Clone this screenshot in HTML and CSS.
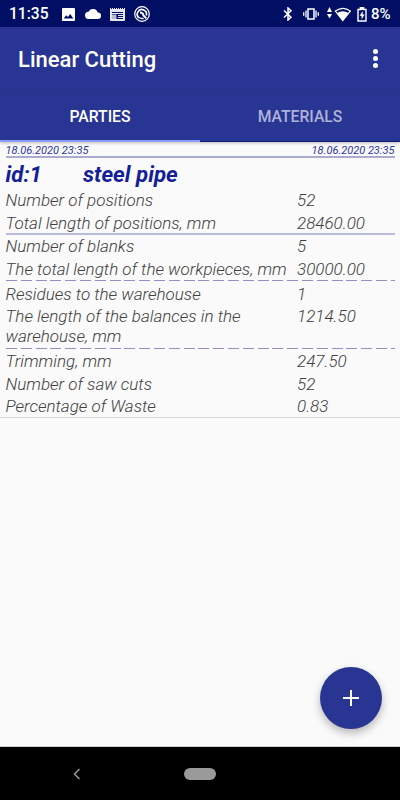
FILE: index.html
```html
<!DOCTYPE html>
<html lang="en">
<head>
    <meta charset="UTF-8">
    <meta name="viewport" content="width=device-width, initial-scale=1.0">
    <title>Linear Cutting</title>
    <link rel="stylesheet" href="styles.css">
</head>
<body>

    <div class="app">
        <div class="status-bar">
            <span class="clock">11:35</span>
            <svg class="icon-picture" width="13" height="13" viewBox="0 0 13 13"><path fill="#fff" fill-rule="evenodd" d="M1 0h11q1 0 1 1v11q0 1-1 1H1q-1 0-1-1V1q0-1 1-1zM1.8 10.5h9.6L8.2 6 5.9 9 4.2 7.2z"/></svg>
            <svg class="icon-cloud" width="16" height="10" viewBox="0 0 16 10"><path fill="#fff" d="M12.8 3.6A5 5 0 0 0 3.5 2.8 3.6 3.6 0 0 0 3.8 10h9a3.2 3.2 0 0 0 0-6.4z"/></svg>
            <svg class="icon-news" width="15" height="13" viewBox="0 0 15 13"><path fill="#e6e7ee" fill-rule="evenodd" d="M0 0h1v1h1V0h1v1h1V0h1v1h1V0h1v1h1V0h1v1h1V0h1v1h1V0h1v1h1V0h1v12q0 1-1 1H1q-1 0-1-1zM2 4v1h11V4zM2 6v5h11v-1H8V9h5V8H8V7h5V6z"/><path fill="#b8bccd" d="M2 6.500h4.500V11H2z"/></svg>
            <svg class="icon-disc" width="16" height="16" viewBox="0 0 16 16" fill="none" stroke="#fff"><circle cx="8" cy="8" r="7.3" stroke-width="1.2"/><path d="M5 11.800A4.600 4.600 0 1 1 12.300 9.500" stroke-width="1.700"/><path d="M6 6.500q3 0 3.500 3l2.800 2.800" stroke-width="1.800"/><path d="M5 11.500q2 1.400 4.600.8" stroke-width="1.300"/></svg>
            <svg class="icon-bluetooth" width="10" height="14" viewBox="0 0 10 14" fill="none" stroke="#fff" stroke-width="1.500"><path d="M1 3.500l7 6.700L5 13V1l3 2.800-7 6.700"/></svg>
            <svg class="icon-vibrate" width="16" height="12" viewBox="0 0 16 12" fill="none" stroke="#fff"><rect x="5" y="1" width="6" height="10" stroke-width="1.500"/><path d="M3 2.500v7M13 2.500v7M.7 4.300v3.400M15.300 4.300v3.400" stroke-width="1.300"/></svg>
            <svg class="icon-wifi" width="24" height="15" viewBox="0 0 24 15"><path fill="#fff" d="M0 5l2.500-5L5 5zM0 7h5l-2.500 4.500z"/><path d="M8.400 4.100Q16 -1.200 23.300 4.100L15.800 13.500z" fill="none" stroke="#fff" stroke-width="1.200"/><path fill="#fff" d="M10 6Q15.800 2.300 21.700 6L15.800 13.800z"/></svg>
            <svg class="icon-battery" width="10" height="15" viewBox="0 0 10 15"><path fill="none" stroke="#fff" stroke-width="1.400" d="M1 2.500h2.300V1h3.400v1.500H9V14H1z"/><path fill="#fff" d="M3.200 0h3.600v3H3.200zM5.700 4L2.600 8.800h2V12.500l3-5h-1.900z"/></svg>
            <span class="percent">8%</span>
        </div>

        <header class="toolbar">
            <h1>Linear Cutting</h1>
            <div class="menu"><i></i><i></i><i></i></div>
        </header>

        <nav class="tabs">
            <div class="tab active">PARTIES</div>
            <div class="tab">MATERIALS</div>
        </nav>

        <main class="content">
            <section class="party">
                <div class="dates">
                    <span>18.06.2020 23:35</span>
                    <span>18.06.2020 23:35</span>
                </div>
                <div class="heading">
                    <span class="party-id">id:1</span>
                    <span>steel pipe</span>
                </div>
                <div class="group">
                    <div class="row"><span>Number of positions</span><span>52</span></div>
                    <div class="row"><span>Total length of positions, mm</span><span>28460.00</span></div>
                </div>
                <div class="line"></div>
                <div class="group">
                    <div class="row"><span>Number of blanks</span><span>5</span></div>
                    <div class="row"><span>The total length of the workpieces, mm</span><span>30000.00</span></div>
                </div>
                <div class="line dashed"></div>
                <div class="group">
                    <div class="row"><span>Residues to the warehouse</span><span>1</span></div>
                    <div class="row"><span>The length of the balances in the warehouse, mm</span><span>1214.50</span></div>
                </div>
                <div class="line dashed"></div>
                <div class="group">
                    <div class="row"><span>Trimming, mm</span><span>247.50</span></div>
                    <div class="row"><span>Number of saw cuts</span><span>52</span></div>
                    <div class="row"><span>Percentage of Waste</span><span>0.83</span></div>
                </div>
            </section>
            <div class="fab">
                <svg width="16" height="16" viewBox="0 0 16 16"><path fill="#fff" d="M7 0h2v7h7v2H9v7H7V9H0V7h7z"/></svg>
            </div>
        </main>

        <footer class="nav-bar">
            <svg class="back" width="8" height="12" viewBox="0 0 8 12"><path d="M6.500 1L1.500 6l5 5" fill="none" stroke="#9a9a9a" stroke-width="1.500"/></svg>
            <div class="home"></div>
        </footer>
    </div>

</body>
</html>
```

FILE: styles.css
```css
/* General Styles */
* {
    box-sizing: border-box;
}

body {
    margin: 0;
    font-family: Roboto, "Liberation Sans", sans-serif;
    background: #fafafa;
}

.app {
    width: 400px;
    height: 800px;
    display: flex;
    flex-direction: column;
    overflow: hidden;
}

/* Status bar */
.status-bar {
    height: 27px;
    flex: none;
    display: flex;
    align-items: center;
    background: #000f64;
    color: #fff;
    padding: 1px 9px 0;
    font-size: 15.6px;
    font-weight: 500;
}

.status-bar svg {
    flex: none;
}

.clock {
    width: 53px;
}

.icon-cloud {
    margin-left: 10px;
}

.icon-news {
    margin-left: 9px;
}

.icon-disc {
    margin-left: 9px;
}

.icon-bluetooth {
    margin-left: auto;
}

.icon-vibrate {
    margin-left: 10px;
}

.icon-wifi {
    margin-left: 8px;
}

.icon-battery {
    margin-left: 6px;
}

.percent {
    margin-left: 4px;
    width: 20px;
    white-space: nowrap;
    font-size: 15px;
}

/* Toolbar */
.toolbar {
    height: 64px;
    flex: none;
    display: flex;
    align-items: center;
    justify-content: space-between;
    padding: 0 22px 0 18px;
    background: #283593;
    color: #fff;
}

.toolbar h1 {
    margin: 0;
    font-size: 22px;
    font-weight: 500;
}

.menu {
    display: flex;
    flex-direction: column;
    gap: 2px;
    padding-bottom: 2px;
}

.menu i {
    width: 5px;
    height: 5px;
    border-radius: 50%;
    background: #fff;
}

/* Tabs */
.tabs {
    height: 51px;
    flex: none;
    display: flex;
    background: #283593;
    border-bottom: 1px solid #101c7c;
    box-shadow: 0 1px 3px rgba(0, 0, 0, 0.25);
}

.tab {
    flex: 1;
    height: 51px;
    line-height: 51px;
    text-align: center;
    font-size: 15.7px;
    font-weight: 500;
    color: #aeb3d8;
}

.tab.active {
    color: #fff;
    border-bottom: 2px solid #8c9eff;
}

/* Party card */
.content {
    flex: 1;
    position: relative;
    border-bottom: 1px solid #ccc;
}

.party {
    padding: 2px 5.5px 0;
    border-bottom: 1px solid #d8d8d8;
    height: 276px;
    font-style: italic;
}

.dates {
    display: flex;
    justify-content: space-between;
    height: 14px;
    line-height: 13px;
    border-bottom: 2px solid #a9acce;
    font-size: 11px;
    color: #2c36a0;
}

.heading {
    display: flex;
    height: 31px;
    line-height: 33px;
    font-size: 22.3px;
    font-weight: 700;
    color: #141f96;
}

.party-id {
    width: 77.5px;
}

.row {
    display: grid;
    grid-template-columns: 291.5px 1fr;
    line-height: 20px;
    padding: 1px 0 1.5px;
    font-size: 17px;
    font-weight: 300;
    color: #404040;
}

.line {
    height: 2px;
    margin-top: -1px;
    background: #b9bbdb;
}

.line.dashed {
    height: 1px;
    margin: 0 0 1.5px;
    background: repeating-linear-gradient(to right, #8f90c4 0 11px, transparent 11px 14.8px);
}

.line.dashed:last-of-type {
    margin-bottom: 1px;
}

/* Add button */
.fab {
    position: absolute;
    right: 18px;
    bottom: 17px;
    width: 62px;
    height: 62px;
    border-radius: 50%;
    display: flex;
    align-items: center;
    justify-content: center;
    background: #283593;
    box-shadow: 0 4px 9px rgba(0, 0, 0, 0.28);
}

/* Navigation bar */
.nav-bar {
    height: 53px;
    flex: none;
    display: flex;
    align-items: center;
    background: #000;
    padding-left: 73px;
}

.home {
    width: 32px;
    height: 12px;
    margin-left: 103px;
    border-radius: 6px;
    background: #9a9a9a;
}
```
